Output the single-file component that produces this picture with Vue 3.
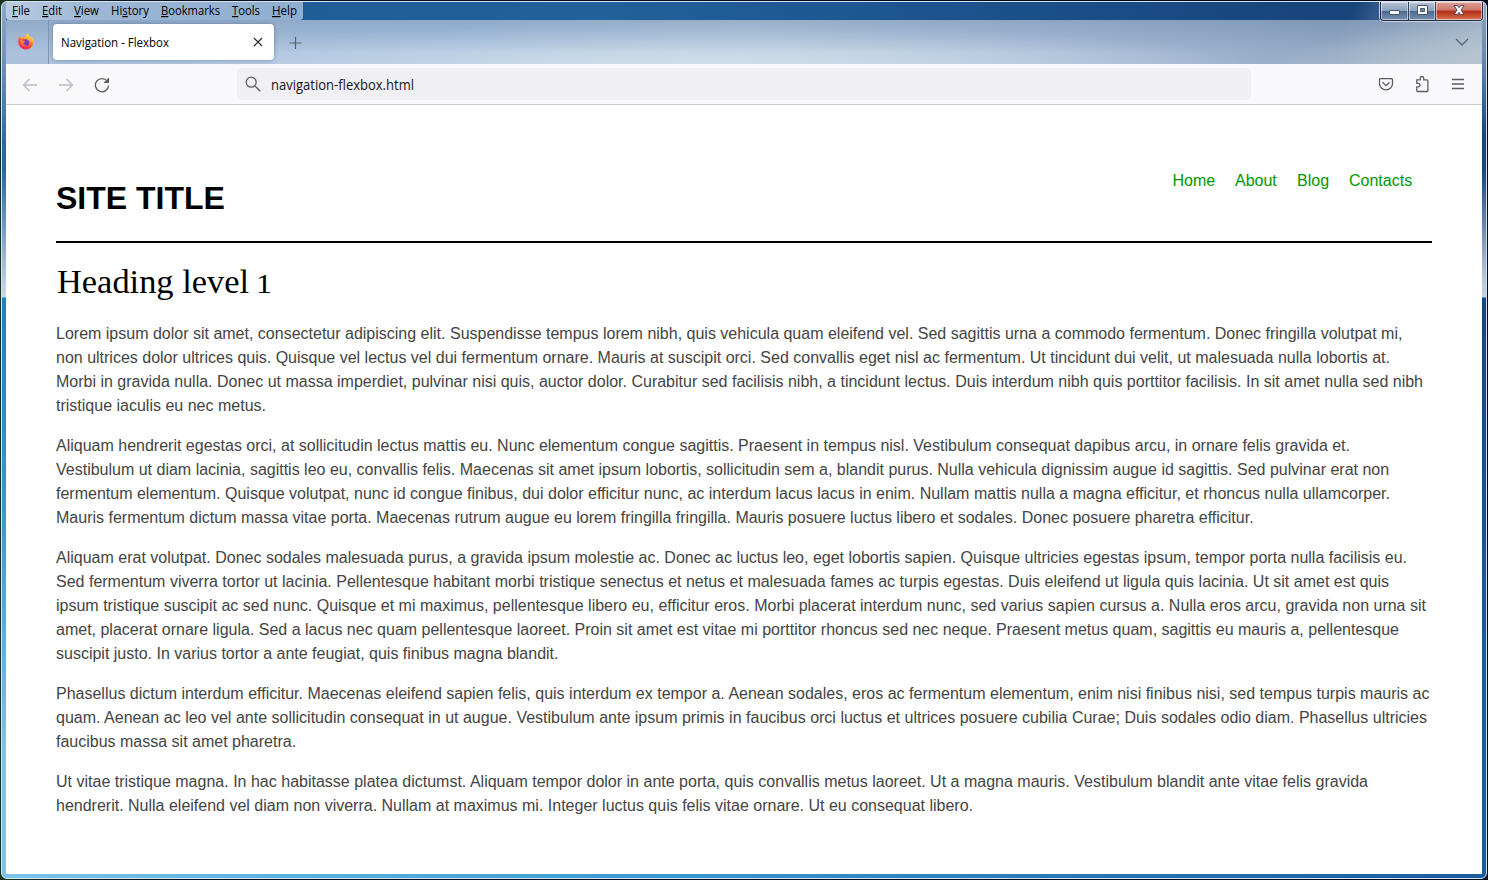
<script setup>
const menus = [['', 'F', 'ile', 12, 18], ['', 'E', 'dit', 42, 20], ['', 'V', 'iew', 74, 25], ['Hi', 's', 'tory', 111, 38], ['', 'B', 'ookmarks', 161, 59], ['', 'T', 'ools', 232, 28], ['', 'H', 'elp', 272, 25]]
const links = [['Home', 42.5], ['About', 42], ['Blog', 32], ['Contacts', 63]]
const paragraphs = [
  [
    ['Lorem ipsum dolor sit amet, consectetur adipiscing elit. Suspendisse tempus lorem nibh, quis vehicula quam eleifend vel. Sed sagittis urna a commodo fermentum. Donec fringilla volutpat mi,', 1346],
    ['non ultrices dolor ultrices quis. Quisque vel lectus vel dui fermentum ornare. Mauris at suscipit orci. Sed convallis eget nisl ac fermentum. Ut tincidunt dui velit, ut malesuada nulla lobortis at.', 1334],
    ['Morbi in gravida nulla. Donec ut massa imperdiet, pulvinar nisi quis, auctor dolor. Curabitur sed facilisis nibh, a tincidunt lectus. Duis interdum nibh quis porttitor facilisis. In sit amet nulla sed nibh', 1367],
    ['tristique iaculis eu nec metus.', 210]
  ],
  [
    ['Aliquam hendrerit egestas orci, at sollicitudin lectus mattis eu. Nunc elementum congue sagittis. Praesent in tempus nisl. Vestibulum consequat dapibus arcu, in ornare felis gravida et.', 1294],
    ['Vestibulum ut diam lacinia, sagittis leo eu, convallis felis. Maecenas sit amet ipsum lobortis, sollicitudin sem a, blandit purus. Nulla vehicula dignissim augue id sagittis. Sed pulvinar erat non', 1333],
    ['fermentum elementum. Quisque volutpat, nunc id congue finibus, dui dolor efficitur nunc, ac interdum lacus lacus in enim. Nullam mattis nulla a magna efficitur, et rhoncus nulla ullamcorper.', 1334],
    ['Mauris fermentum dictum massa vitae porta. Maecenas rutrum augue eu lorem fringilla fringilla. Mauris posuere luctus libero et sodales. Donec posuere pharetra efficitur.', 1197]
  ],
  [
    ['Aliquam erat volutpat. Donec sodales malesuada purus, a gravida ipsum molestie ac. Donec ac luctus leo, eget lobortis sapien. Quisque ultricies egestas ipsum, tempor porta nulla facilisis eu.', 1351],
    ['Sed fermentum viverra tortor ut lacinia. Pellentesque habitant morbi tristique senectus et netus et malesuada fames ac turpis egestas. Duis eleifend ut ligula quis lacinia. Ut sit amet est quis', 1333],
    ['ipsum tristique suscipit ac sed nunc. Quisque et mi maximus, pellentesque libero eu, efficitur eros. Morbi placerat interdum nunc, sed varius sapien cursus a. Nulla eros arcu, gravida non urna sit', 1370],
    ['amet, placerat ornare ligula. Sed a lacus nec quam pellentesque laoreet. Proin sit amet est vitae mi porttitor rhoncus sed nec neque. Praesent metus quam, sagittis eu mauris a, pellentesque', 1343],
    ['suscipit justo. In varius tortor a ante feugiat, quis finibus magna blandit.', 502]
  ],
  [
    ['Phasellus dictum interdum efficitur. Maecenas eleifend sapien felis, quis interdum ex tempor a. Aenean sodales, eros ac fermentum elementum, enim nisi finibus nisi, sed tempus turpis mauris ac', 1373.5],
    ['quam. Aenean ac leo vel ante sollicitudin consequat in ut augue. Vestibulum ante ipsum primis in faucibus orci luctus et ultrices posuere cubilia Curae; Duis sodales odio diam. Phasellus ultricies', 1371],
    ['faucibus massa sit amet pharetra.', 240]
  ],
  [
    ['Ut vitae tristique magna. In hac habitasse platea dictumst. Aliquam tempor dolor in ante porta, quis convallis metus laoreet. Ut a magna mauris. Vestibulum blandit ante vitae felis gravida', 1312],
    ['hendrerit. Nulla eleifend vel diam non viverra. Nullam at maximus mi. Integer luctus quis felis vitae ornare. Ut eu consequat libero.', 917]
  ]
]
</script>

<template>
  <div class="window">
    <div class="frame">
      <header class="titlebar">
        <nav class="menu">
          <svg width="297" height="19">
            <text v-for="m in menus" :key="m[3]" :x="m[3] - 6" y="13" :textLength="m[4]" lengthAdjust="spacingAndGlyphs">{{ m[0] }}<tspan class="key">{{ m[1] }}</tspan>{{ m[2] }}</text>
          </svg>
        </nav>
        <div class="controls">
          <span class="ctl min"><svg width="24" height="18"><rect x="7.5" y="8.5" width="10" height="4" rx=".5" fill="#fff" stroke="#48566b" /></svg></span>
          <span class="ctl max"><svg width="24" height="18"><path d="M8.500 3.500h10v9h-10z" fill="#fff" stroke="#48566b" /><path d="M11.500 6.500h4v3h-4z" fill="#728aa9" stroke="#48566b" /></svg></span>
          <span class="ctl close"><svg width="41" height="18"><path d="M18 3.500h3.400l1.600 2.200 1.600-2.200H28l-3 4.600 3 4.400h-3.400L23 10.300l-1.600 2.200H18l3-4.400z" fill="#fff" stroke="#58495b" /></svg></span>
        </div>
      </header>
      <div class="tabs">
        <div class="fox">
          <svg width="18" height="18" viewBox="0 0 18 18">
            <defs>
              <linearGradient id="flame" x1=".8" y1="0" x2=".3" y2="1"><stop offset="0" stop-color="#fff44f" /><stop offset=".35" stop-color="#ffb02e" /><stop offset=".6" stop-color="#ff5634" /><stop offset="1" stop-color="#f5156c" /></linearGradient>
            </defs>
            <path d="M2.600 3.100 4.200 5c1-.5 1.700-.5 2.400-.4C7.700 3 9 2.800 9.200 2.700L10 .3c1.500 1.200 2 2.300 3.100 3.700l.9 1.100.4-1.400c2 2 2.300 4.300 2.200 6a7.700 7.600 0 0 1-15.300 0C1.200 7 1.600 5.300 2.600 3.100z" fill="url(#flame)" />
            <path d="M5.200 7.200c1.400-1 3.500-1.300 5.200-.5 2.300 1.100 2.500 4 .8 5.300-1.600 1.200-4.100 1-5.300-.6 1.300.4 2.500.2 3.300-.6-1.500.1-1.700-.8-2.800-1.100l1.800-1.300c-1-.1-1.700-.5-3-1.200z" fill="#7938d0" />
            <path d="M3.200 7.600c1.700-.6 3.500-.2 4.800.6L6.300 9.500c-1 1.600.6 3.600 3 2.900-1.700 1.800-5.700.6-6.100-4.800z" fill="#ff8a22" />
          </svg>
        </div>
        <div class="tab">
          <svg width="221" height="36">
            <text x="8" y="23" textLength="108" lengthAdjust="spacingAndGlyphs">Navigation - Flexbox</text>
            <path d="M201 14l8 8m0-8l-8 8" fill="none" stroke="#25252d" stroke-width="1.100" />
          </svg>
        </div>
        <svg class="plus" width="14" height="14"><path d="M7.500 1v12M1.500 7h12" stroke="#56606e" stroke-width="1.200" /></svg>
        <svg class="chevron" width="14" height="8"><path d="M1 1l6 6 6-6" fill="none" stroke="#5b6474" stroke-width="1.300" /></svg>
      </div>
      <div class="toolbar">
        <div class="history">
          <svg width="16" height="16" class="off"><path d="M15 8H1.500M7.500 2l-6 6 6 6" /></svg>
          <svg width="16" height="16" class="off"><path d="M1 8h13.500M8.500 2l6 6-6 6" /></svg>
          <svg width="16" height="16"><path d="M13.300 4.200A6.600 6.600 0 1 0 14.600 8.500M10 5.300h4.300V1" /><path d="M10.500 5.300h4V1.300z" fill="#5b5b66" stroke="none" /></svg>
        </div>
        <div class="address">
          <svg width="180" height="32">
            <circle cx="14.200" cy="14.200" r="5" class="line" /><path d="M18 18l5.300 5.300" class="line" />
            <text x="34" y="22" textLength="143" lengthAdjust="spacingAndGlyphs">navigation-flexbox.html</text>
          </svg>
        </div>
        <div class="actions">
          <svg width="16" height="17"><path d="M2.500 2.700h11q1 0 1 1v4a6.500 6.200 0 0 1-13 0v-4q0-1 1-1zM4.500 6.200l3.500 3.500 3.500-3.500" /></svg>
          <svg width="16" height="18"><path d="M2.800 3.900h3.500V2.200a1.700 1.700 0 0 1 3.400 0v1.700h3.200q1 0 1 1v9.600q0 1-1 1H3.800q-1 0-1-1v-3.600h1.500a1.700 1.700 0 0 0 0-3.500H2.800z" /></svg>
          <svg width="16" height="16"><path d="M2 3.500h12M2 8h12M2 12.500h12" /></svg>
        </div>
      </div>
      <main class="page">
        <div class="site-head">
          <div class="site-title">SITE TITLE</div>
          <nav class="links"><a v-for="l in links" :key="l[0]" :style="{ width: l[1] + 'px' }">{{ l[0] }}</a></nav>
        </div>
        <h1><svg width="240" height="48"><text x="1" y="35" textLength="192" lengthAdjust="spacingAndGlyphs">Heading level</text><text x="200" y="35" class="old-one" textLength="16" lengthAdjust="spacingAndGlyphs">1</text></svg></h1>
        <p v-for="(p, i) in paragraphs" :key="i">
          <span v-for="l in p" :key="l[0]" class="row" :style="{ width: l[1] + 'px' }">{{ l[0] }}</span>
        </p>
      </main>
    </div>
  </div>
</template>

<style>
body { margin: 0; overflow: hidden; background: #07101f; }
</style>
<style scoped>
* { box-sizing: border-box; }
svg { display: block; flex: none; }
.window { width: 1488px; height: 880px; padding: 1px; background: linear-gradient(90deg, #17321f, #06101f 10%, #00081a); }
.frame {
  height: 878px; padding: 0 4px 4px; border: 1px solid #d7e3ef; border-radius: 6px; overflow: hidden;
  background:
    linear-gradient(90deg, #7cc4ea, #58b2de 20%, #3a98d0 45%, #2474b6 75%, #1a5c9e) bottom / 100% 4px no-repeat,
    linear-gradient(#8fa6c6 0, #6f90bc 60px, #2b68a6 145px, #2b68a6 170px, #bdd0e4 282px, #c5d5e5 295px, #2080bd 296px, #3a96cc 500px, #7cc4ea 750px) left / 4px 100% no-repeat,
    linear-gradient(#8fa6bf 0, #6288b0 60px, #1a4980 130px, #1a4980 170px, #b6c5d7 275px, #c5d1dd 295px, #17477f 296px, #1a5c9e 650px) right / 4px 100% no-repeat,
    #1b5697;
}
.titlebar { height: 18px; display: flex; justify-content: space-between; background: linear-gradient(112deg, transparent 91%, #7891b1 97%), linear-gradient(90deg, #1d5796, #22619b 40%, #1b4f8a 70%, #17447a 90%); }
.menu { width: 297px; height: 18px; background: linear-gradient(90deg, #b9cbe0, #9db7d5 30%, #8faed0); border-radius: 0 0 3px 3px; }
.menu text { font: 12px "Open Sans", "Noto Sans", sans-serif; fill: #000; }
.key { text-decoration: underline; }
.controls { display: flex; height: 19px; width: 103px; margin-right: -1px; border: 1px solid #1e2b42; border-top: 0; border-radius: 0 0 4px 4px; box-shadow: 0 0 0 1px #c4d0dd; position: relative; z-index: 1; overflow: hidden; }
.ctl { height: 18px; width: 27px; box-shadow: inset 0 0 0 1px #ffffff80; background: linear-gradient(#b6c4d6, #8ca1bd 48%, #4b688e 50%, #7890b1); }
.max { border-left: 1px solid #34445f; }
.close { width: 47px; border-left: 1px solid #34445f; background: linear-gradient(#dfa096, #cd7869 45%, #b32d1a 50%, #c65532 80%, #d5806b); }
.min svg { margin-left: 1px; }
.tabs { height: 44px; display: flex; align-items: flex-start; background: linear-gradient(165deg, transparent 85%, #b8c5d3c0 97%), linear-gradient(#54759d50, transparent 75%), radial-gradient(ellipse 600px 45px at 680px 50px, #d2e1ed, transparent), linear-gradient(90deg, #acc2dc, #a9c2df 30%, #b7cce0 50%, #a8bcd7 70%, #93a9c4 90%, #aabccd); }
.fox { width: 43px; height: 44px; padding: 13px 0 0 11px; border-right: 1px solid #7f95ae; }
.tab { margin: 4px 0 0 4px; width: 221px; height: 36px; background: #fff; border-radius: 4px; box-shadow: 0 0 4px #43597788; }
.tab text { font: 12px "Open Sans", "Noto Sans", sans-serif; fill: #000; }
.plus { margin: 16px 0 0 14px; }
.chevron { margin: 18px 13px 0 auto; }
.toolbar { height: 41px; display: flex; background: #f9f9fb; border-bottom: 1px solid #ccc; }
.history { width: 231px; padding: 13px 16px; display: flex; gap: 20px; }
.history path, .actions path, .line { fill: none; stroke: #5b5b66; stroke-width: 1.300; }
.history .off path { stroke: #bbbbc0; }
.history path[fill] { fill: #5b5b66; stroke: none; }
.address { width: 1014px; height: 32px; margin: 4px 0; border-radius: 4px; background: #f0f0f4; }
.address text { font: 13.600px "Open Sans", "Noto Sans", sans-serif; fill: #15141a; }
.actions { display: flex; gap: 20px; margin-left: auto; padding: 12px 16px 0 0; }
.page { height: 769px; padding: 56px 50px 0; background: #fff; font: 16px/24px "Liberation Sans", Arial, sans-serif; color: #444; }
.site-head { height: 82px; display: flex; justify-content: space-between; border-bottom: 2px solid #000; }
.site-title { padding-top: 13px; font-size: 32px; line-height: 48px; font-weight: 700; color: #000; }
.links { display: flex; gap: 20px; padding: 8px 20px 0 0; }
.links a { color: #090; white-space: nowrap; }
h1 { margin: 15px 0 0; height: 48px; color: #000; font-weight: 400; }
h1 text { font: 34px "Liberation Serif", Georgia, serif; fill: #000; }
h1 .old-one { font-size: 27px; }
p { margin: 16px 0; }
p + p { margin-top: 0; }
.row { display: block; white-space: nowrap; text-align: justify; text-align-last: justify; }
</style>
